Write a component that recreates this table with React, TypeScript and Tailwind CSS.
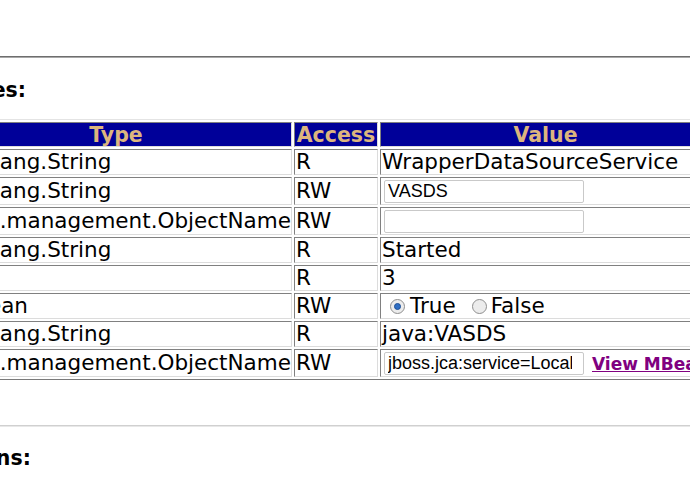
import React from "react";

const cell =
  "flex items-center border border-t-[#808080] border-l-[#808080] border-b-[#dcdcdc] border-r-[#dcdcdc] px-[1px] py-[1px] leading-[22px] whitespace-nowrap overflow-hidden";
const head =
  "flex items-center justify-center h-[25px] border border-t-[#808080] border-l-[#808080] border-b-[#dcdcdc] border-r-[#dcdcdc] bg-[#000099] text-[#dcb57e] font-bold text-[20.5px] leading-[22px] whitespace-nowrap overflow-hidden";

function Radio({ checked }: { checked?: boolean }) {
  return (
    <span className="inline-flex items-center justify-center w-[15px] h-[15px] rounded-full border border-[#8e8e8e] bg-[#ececec] shrink-0">
      {checked ? <span className="block w-[7px] h-[7px] rounded-full bg-[#2f6fc4] border border-[#1d4f96]" /> : null}
    </span>
  );
}

function TextInput({ value }: { value: string }) {
  return (
    <div className="w-[200px] h-[23px] border border-[#c9c9c9] rounded-[2px] bg-white pl-[3px] text-[18px] leading-[21px] text-black [font-family:'Liberation_Sans',Arial,sans-serif]">
      <div className="w-[184px] overflow-hidden whitespace-nowrap">{value}</div>
    </div>
  );
}

type Row = { type: string; access: string; value: React.ReactNode; input?: boolean };

const rows: Row[] = [
  { type: "java.lang.String", access: "R", value: "WrapperDataSourceService" },
  { type: "java.lang.String", access: "RW", value: <TextInput value="VASDS" />, input: true },
  { type: "javax.management.ObjectName", access: "RW", value: <TextInput value="" />, input: true },
  { type: "java.lang.String", access: "R", value: "Started" },
  { type: "int", access: "R", value: "3" },
  {
    type: "boolean",
    access: "RW",
    value: (
      <div className="flex items-center pl-[8px]">
        <Radio checked />
        <span className="ml-[5px]">True</span>
        <span className="ml-[16px] flex">
          <Radio />
        </span>
        <span className="ml-[4px]">False</span>
      </div>
    ),
  },
  { type: "java.lang.String", access: "R", value: "java:VASDS" },
  {
    type: "javax.management.ObjectName",
    access: "RW",
    value: (
      <div className="flex items-center">
        <TextInput value="jboss.jca:service=LocalTxCM,name=VASDS" />
        <a className="ml-[8px] font-bold text-[17px] text-[#800080] underline">View MBean</a>
      </div>
    ),
    input: true,
  },
];

export default function App() {
  return (
    <div className="w-[690px] h-[500px] overflow-hidden bg-white text-black [font-family:'DejaVu_Sans',Verdana,sans-serif]">
      <div className="ml-[-63px] w-[760px] pt-[56px]">
        <div className="border-t border-t-[#6e6e6e] border-b border-b-[#a8a8a8]" />
        <h3 className="ml-[-37px] mt-[20px] h-[24px] leading-[24px] text-[20.5px] font-bold">Attributes:</h3>
        <div className="mt-[17px] w-max grid grid-cols-[352px_84px_331px_220px] gap-[2px] p-[2px] border border-t-[#e4e4e4] border-l-[#e4e4e4] border-b-[#7a7a7a] border-r-[#7a7a7a] text-[21.5px]">
          <div className={head}>Type</div>
          <div className={head}>Access</div>
          <div className={head}>Value</div>
          <div className={head}>Description</div>
          {rows.map((r, i) => (
            <React.Fragment key={i}>
              <div className={cell}>{r.type}</div>
              <div className={cell}>{r.access}</div>
              <div className={r.input ? cell + " pl-[3px] pt-[2px] pb-[1px]" : cell}>{r.value}</div>
              <div className={cell}></div>
            </React.Fragment>
          ))}
        </div>
        <div className="mt-[45px] border-t border-t-[#d0d0d0] border-b border-b-[#e8e8e8]" />
        <h3 className="ml-[-42px] mt-[19px] h-[24px] leading-[24px] text-[20.5px] font-bold">Operations:</h3>
      </div>
    </div>
  );
}
